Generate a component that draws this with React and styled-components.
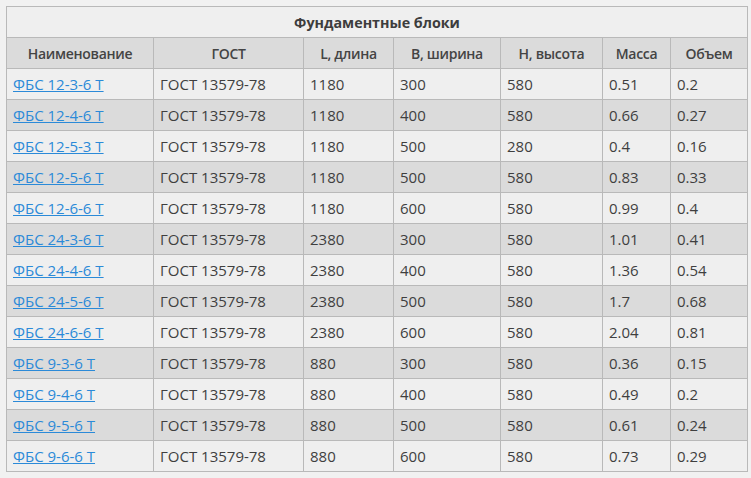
import React from "react";
import styled, { createGlobalStyle } from "styled-components";

const Global = createGlobalStyle`
  html, body { margin: 0; padding: 0; background: #f1f1f1; }
  body { padding: 6px 0 0 6px; font-family: "Open Sans", "Liberation Sans", sans-serif; }
`;

const Table = styled.table`
  border-collapse: collapse;
  table-layout: fixed;
  width: 742px;
  font-size: 15px;
  color: #3f3f3f;
  background: #efefef;
  border: 1px solid #b9b9b9;
`;

const Caption = styled.th`
  height: 30px;
  padding: 0;
  font-weight: 700;
  font-size: 14.3px;
  color: #3d3d3d;
  text-align: center;
  border: 1px solid #b9b9b9;
  background: #efefef;
`;

const Head = styled.th`
  height: 30px;
  padding: 0 6px;
  font-weight: 600;
  font-size: 14px;
  letter-spacing: -0.3px;
  color: #444;
  text-align: center;
  background: #dbdbdb;
  border: 1px solid #b9b9b9;
  white-space: nowrap;
`;

const Row = styled.tr`
  background: ${(p) => (p.$alt ? "#dbdbdb" : "#efefef")};
`;

const Cell = styled.td`
  height: 30px;
  padding: 0 6px;
  text-align: left;
  border: 1px solid #b9b9b9;
  white-space: nowrap;
`;

const Link = styled.a`
  color: #2b8ad8;
  text-decoration: underline;
`;

const widths = [147, 150, 90, 107, 102, 68, 77];
const heads = ["Наименование", "ГОСТ", "L, длина", "B, ширина", "H, высота", "Масса", "Объем"];

const rows = [
  ["ФБС 12-3-6 Т", "1180", "300", "580", "0.51", "0.2"],
  ["ФБС 12-4-6 Т", "1180", "400", "580", "0.66", "0.27"],
  ["ФБС 12-5-3 Т", "1180", "500", "280", "0.4", "0.16"],
  ["ФБС 12-5-6 Т", "1180", "500", "580", "0.83", "0.33"],
  ["ФБС 12-6-6 Т", "1180", "600", "580", "0.99", "0.4"],
  ["ФБС 24-3-6 Т", "2380", "300", "580", "1.01", "0.41"],
  ["ФБС 24-4-6 Т", "2380", "400", "580", "1.36", "0.54"],
  ["ФБС 24-5-6 Т", "2380", "500", "580", "1.7", "0.68"],
  ["ФБС 24-6-6 Т", "2380", "600", "580", "2.04", "0.81"],
  ["ФБС 9-3-6 Т", "880", "300", "580", "0.36", "0.15"],
  ["ФБС 9-4-6 Т", "880", "400", "580", "0.49", "0.2"],
  ["ФБС 9-5-6 Т", "880", "500", "580", "0.61", "0.24"],
  ["ФБС 9-6-6 Т", "880", "600", "580", "0.73", "0.29"],
];

export default function App() {
  return (
    <>
      <Global />
      <Table>
        <colgroup>
          {widths.map((w, i) => (
            <col key={i} style={{ width: w }} />
          ))}
        </colgroup>
        <thead>
          <tr>
            <Caption colSpan={7}>Фундаментные блоки</Caption>
          </tr>
          <tr>
            {heads.map((h) => (
              <Head key={h}>{h}</Head>
            ))}
          </tr>
        </thead>
        <tbody>
          {rows.map((r, i) => (
            <Row key={r[0]} $alt={i % 2 === 1}>
              <Cell>
                <Link href="#">{r[0]}</Link>
              </Cell>
              <Cell>ГОСТ 13579-78</Cell>
              {r.slice(1).map((v, j) => (
                <Cell key={j}>{v}</Cell>
              ))}
            </Row>
          ))}
        </tbody>
      </Table>
    </>
  );
}
